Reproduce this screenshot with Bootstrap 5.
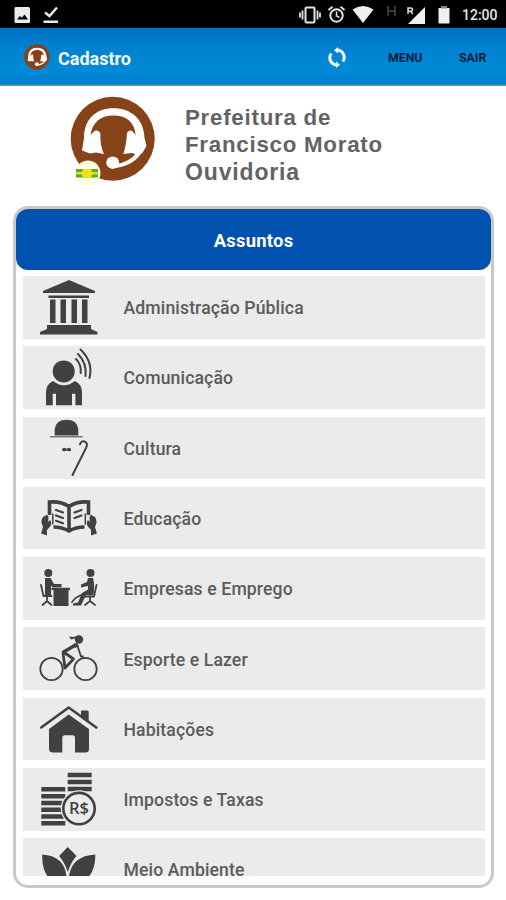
<!DOCTYPE html>
<html lang="pt-BR">
<head>
<meta charset="utf-8">
<meta name="viewport" content="width=device-width, initial-scale=1">
<title>Cadastro</title>
<link href="https://cdn.jsdelivr.net/npm/bootstrap@5.3.0/dist/css/bootstrap.min.css" rel="stylesheet">
<style>
html,body{height:900px;overflow:hidden}
body{font-family:Roboto,"Liberation Sans",sans-serif;background:#fff}
svg{display:block;flex:none}
.status{height:28px;background:#000}
.clock{font-size:14px;font-weight:500;color:#e8e8e8;line-height:28px;width:40px;white-space:nowrap;padding-top:2px}
.appbar{height:58px;background:linear-gradient(#0073c6,#0081d0 35%,#008ad6 70%,#0082cf 96%,#4aa8dc)}
.brand-name{font-size:18px;font-weight:700;line-height:24px;color:#f4faff;margin-left:8px;padding-top:3px}
.act{font-size:12.3px;font-weight:700;color:#062038;line-height:20px;padding-top:2px}
#sync{margin-right:41px}
#menu{width:36px;margin-right:35px}
#sair{width:30px;margin-right:17px}
.hero{height:120px;padding:10px 0 0 70px}
.hero h1{font:700 22.300px/27.800px "Liberation Sans",sans-serif;letter-spacing:.75px;color:#636363;margin:7.500px 0 0 29px;white-space:nowrap}
.hero h1 span{font-size:23px;letter-spacing:.85px}
.panel{margin:0 12px 0 13px;height:682px;border:3px solid #c8c8c8;border-radius:15px;padding:0 0 9px}
.panel-title{height:60.5px;background:#0052ae;border-radius:12px;color:#fff;font-size:18.4px;letter-spacing:.25px;font-weight:700;flex:none;padding-top:3px}
.topics{margin:6.5px 6px 0 6.5px;gap:7.8px;min-height:0}
.topic{height:62.5px;background:#ebebeb;flex:none;padding-left:15.5px;color:#5b5b5b;font-size:17.6px;font-weight:500;letter-spacing:.13px}
.topic span{padding-top:2px}
.topic svg{width:60px;height:62.5px;margin-right:25.5px;fill:#414141;overflow:visible}
.ln{fill:none;stroke:#414141;stroke-linecap:round;stroke-linejoin:round}
.sharp{stroke-linecap:butt;stroke-linejoin:miter}
</style>
</head>
<body class="d-flex flex-column">
<svg width="0" height="0" class="position-absolute">
  <symbol id="ouvidor" viewBox="0 0 86 86">
    <circle cx="42.7" cy="42.7" r="42" fill="#874218"/>
    <path d="M14 42C14 23 26 12.300 43.500 12.300S74 23 74.500 42L76.500 50 72 57.500Q66 59 62 57L53.300 58Q56 51 57 37Q61 31 65.500 39.500C65 27 57 19.500 43.500 19.500S22 27 20.500 39.500Q26 31 30.300 37Q30 50 34 58L26 56.500 20 57.500 12 54.500Z" fill="#fff"/>
    <path d="M73 54Q66 69 46 72V68Q60 66 67 56Z" fill="#fff"/>
    <ellipse cx="42.700" cy="66.700" rx="6.500" ry="6.200" fill="#fff"/>
  </symbol>
</svg>

<div class="status d-flex align-items-center">
  <svg width="506" height="28" viewBox="0 0 506 28" class="position-absolute">
    <path fill="#ebebeb" fill-rule="evenodd" d="M15.5 7H28.5Q30 7 30 8.500V21.500Q30 23 28.500 23H16Q14.500 23 14.500 21.500V8.500Q14.500 7 15.500 7ZM17 19.500H28L24.500 14.500 21.800 17.800 19.800 16Z"/>
    <path d="M45 12.500 49.500 16 57 7.500" fill="none" stroke="#ebebeb" stroke-width="2.400"/><path d="M43.500 20.500H58V23H43.500Z" fill="#ebebeb"/>
    <g fill="none" stroke="#e3e3e3" stroke-width="2"><rect x="305.500" y="7.500" width="9" height="15" rx="1"/><path d="M302.500 10.500V19.500M317.500 10.500V19.500M300 12.500V17.500M320 12.500V17.500" stroke-width="1.800"/><circle cx="336.500" cy="15.500" r="6.200"/><path d="M336.500 11.500V15.800L339.300 17.500" stroke-width="1.500"/><path d="M328.500 10 332.500 6.800M344.500 10 340.500 6.800"/></g>
    <path d="M352.500 9.500Q363 2.500 373.500 9.500L363 23Z" fill="#f0f0f0"/>
    <path d="M388 6V16M395 6V16M388 11H395" fill="none" stroke="#494949" stroke-width="1.500"/>
    <path d="M425 7V24H408Z" fill="#f0f0f0"/><path d="M404 5H414.500V16H404Z" fill="#000"/>
    <path d="M408 14V8H410.500Q412.500 8 412.500 9.700T410.500 11.300H408M410.500 11.300 412.800 14" fill="none" stroke="#ddd" stroke-width="1.500"/>
    <path d="M441.500 6.500H446.500V8H449.500V23.500H438.500V8H441.500Z" fill="#f0f0f0"/><path d="M441 6H447V8.500H441Z" fill="#888"/>
  </svg>
  <span class="clock ms-auto me-1">12:00</span>
</div>

<nav class="appbar d-flex align-items-center">
  <svg width="26" height="26" class="ms-4"><use href="#ouvidor"/></svg>
  <span class="brand-name">Cadastro</span>
  <svg width="20" height="22" viewBox="0 0 20 22" class="ms-auto" id="sync"><g fill="none" stroke="#f2f9ff" stroke-width="3"><path d="M10 4A7.300 7.300 0 0 1 15.800 15.500"/><path d="M10 19A7.300 7.300 0 0 1 4.200 7.500"/></g><path d="M11 1V7.500L7 4.200ZM9 15.500V22L13 18.800Z" fill="#f2f9ff"/></svg>
  <span class="act" id="menu">MENU</span>
  <span class="act" id="sair">SAIR</span>
</nav>

<header class="hero d-flex align-items-start">
  <svg width="86" height="91" viewBox="0 0 86 91"><use href="#ouvidor" width="86" height="86"/>
    <circle cx="18" cy="77" r="12.500" fill="#fdfcdc"/><path d="M6 73H28V81.500H6Z" fill="#58ae2c"/><path d="M6 76H28V78.500H6Z" fill="#d7df35"/><path d="M13 73H21L22.500 77 21 81.500H13L11.500 77Z" fill="#f5df1c"/>
  </svg>
  <h1>Prefeitura de<br>Francisco Morato<br><span>Ouvidoria</span></h1>
</header>

<main class="panel d-flex flex-column">
  <div class="panel-title d-flex align-items-center justify-content-center">Assuntos</div>
  <div class="topics d-flex flex-column overflow-hidden">
    <div class="topic d-flex align-items-center"><svg viewBox="0 0 60 62.500"><path d="M31 4 57 15V17H5V15ZM10.500 19.500H51V22H10.500ZM12 23.500H17.500V47H12ZM22.500 23.500H28V47H22.500ZM33.500 23.500H39V47H33.500ZM44 23.500H49.500V47H44ZM9 49H53V53L59.500 56V58.500H2V56L9 53Z"/></svg><span>Administração Pública</span></div>
    <div class="topic d-flex align-items-center"><svg viewBox="0 0 60 62.500"><circle cx="25.700" cy="25.400" r="11"/><path d="M15 35Q26 43.500 37 35Q44 38 44 47V59.300H37.400V47.700H34V59.300H18V47.700H14.700V59.300H8V47Q8 38 15 35Z"/><path class="ln" stroke-width="2" d="M38 13Q43.500 18.500 42.700 27M40 8Q49 17 47.500 30M42.500 3.500Q55.500 16 51.500 32"/></svg><span>Comunicação</span></div>
    <div class="topic d-flex align-items-center"><svg viewBox="0 0 60 62.500"><path d="M16.700 18.500V12Q18 2.700 28.500 2.700T40.300 12V18.500Z"/><path d="M12 19H44.700V20.500H12Z" fill="#777"/><path d="M24.300 34V31.500L26.500 30.800 28.600 31.800 31 30.800 33 31.800V34L31 34.300 28.600 33.500 26.500 34.300Z"/><path class="ln" stroke-width="2" d="M34.500 58 48 31Q50.500 26 46.500 24.500 43 23.500 42 27.500"/></svg><span>Cultura</span></div>
    <div class="topic d-flex align-items-center"><svg viewBox="0 0 60 62.500"><path class="ln sharp" stroke-width="3.600" d="M11.500 28V15Q23 14 31 19.500Q39 14 50.500 15V28M31 19V44M15.500 40Q24 40 31 44Q38 40 46.500 40"/><path class="ln" stroke-width="1.500" d="M14.800 27V37M47.300 27V37"/><path class="ln" stroke-width="2.200" d="M18 23 25 25.500M18 28.500 25 31M18 33.800 25 36.300M43.500 23 36.500 25.500M43.500 28.500 36.500 31"/><path d="M8.500 28Q10.500 28 10.500 31L10 35 12 33Q14 35 12.500 39L9 43V48.500L3 46.500 5 40Q2 34 5 30ZM53.500 28Q51.500 28 51.500 31L52 35 50 33Q48 35 49.500 39L53 43V48.500L59 46.500 57 40Q60 34 57 30Z"/></svg><span>Educação</span></div>
    <div class="topic d-flex align-items-center"><svg viewBox="0 0 60 62.500"><circle cx="10.300" cy="16" r="4"/><circle cx="52.500" cy="16" r="4"/><path d="M7 21H12.500L16 27H23.500V30.200H14.500L13 28.500V38H7ZM13.500 30.800H32V33H30.500V49H15.500V33H13.500ZM50 21H55Q57 28 55.500 38H48L43 48.500 35 48.500V46.500L40 45.500 44 36 50 32.500V29L43 30.500V27.500L49 25Z"/><path class="ln" stroke-width="1.800" d="M3 28 5.500 39H13.500M9 39V44L4.500 48M9 44 13.500 48M58.500 28 56 39.500H46M52 39V44L47 48M52 44 57 48M46 36.500 37.500 41 34 45"/></svg><span>Empresas e Emprego</span></div>
    <div class="topic d-flex align-items-center"><svg viewBox="0 0 60 62.500"><g class="ln" stroke-width="1.800"><circle cx="13.500" cy="42" r="11.200"/><circle cx="47.500" cy="42" r="11.200"/><path d="M39.500 19 43 29.500H45"/><path stroke-width="3.400" d="M37.500 18 25.500 25"/><path stroke-width="2.800" d="M25.500 25 35.500 32 27 41M25 26 27 41"/></g><circle cx="41" cy="12.500" r="4.200"/><path d="M41 8 36 10 31 9.500 33 12.500 37 11.500ZM35 17 39 16 41 19 37 21Z"/></svg><span>Esporte e Lazer</span></div>
    <div class="topic d-flex align-items-center"><svg viewBox="0 0 60 62.500"><path d="M43 20V13Q43 12.500 44 12.500H49.500Q50.700 12.500 50.700 14V25ZM30.700 16.500 51 31V51Q51 54.500 47.500 54.500H37V40Q37 37.200 34.500 37.200H27Q24.300 37.200 24.300 40V54.500H15Q11 54.500 11 51V31Z"/><path fill="none" stroke="#ebebeb" stroke-width="3" d="M6 31.500 30.700 14 55.500 31.500"/><path class="ln" stroke-width="2.600" d="M3.200 29.500 30.700 9.500 58.300 29.500"/></svg><span>Habitações</span></div>
    <div class="topic d-flex align-items-center"><svg viewBox="0 0 60 62.500"><path stroke="#414141" stroke-width="4.500" d="M3.300 21.200H27.300M3.300 28.200H27.300M3.300 35H27.300M3.300 41.800H27.300M3.300 48.600H27.300M3.300 55.300H27.300M29.700 6.900H53.700M29.700 13.900H53.700M29.700 20.900H53.700"/><circle cx="41" cy="40.600" r="18.300" fill="#ebebeb"/><circle cx="41" cy="40.600" r="15.700" fill="none" stroke="#414141" stroke-width="2.600"/><text x="41" y="46" text-anchor="middle" textLength="20" lengthAdjust="spacingAndGlyphs" font-family="Open Sans,sans-serif" font-size="15.500" font-weight="600" letter-spacing="0">R$</text></svg><span>Impostos e Taxas</span></div>
    <div class="topic d-flex align-items-center"><svg viewBox="0 0 60 62.500"><path d="M29.700 8.900Q35 14 38.500 18Q33 24 29.800 34Q26.500 24 21 18Q25 14 29.700 8.900ZM4.300 16.600Q26 18 28.500 38L26 50Q3 42 4.300 16.600ZM57.300 16.600Q34 18 31 38L33 50Q58 42 57.300 16.600Z"/></svg><span>Meio Ambiente</span></div>
  </div>
</main>
<script src="https://cdn.jsdelivr.net/npm/bootstrap@5.3.0/dist/js/bootstrap.bundle.min.js"></script>
</body>
</html>
